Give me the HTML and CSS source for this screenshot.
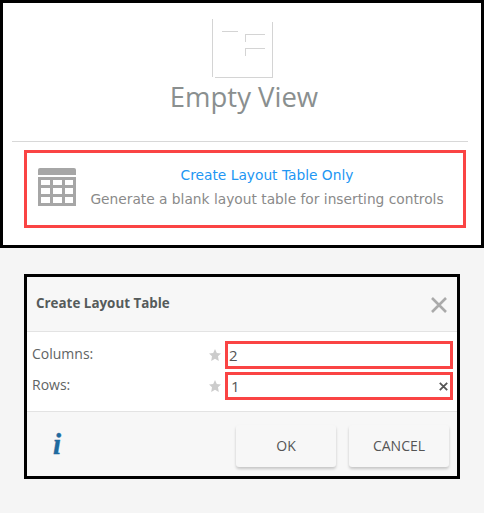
FILE: index.html
```html
<!DOCTYPE html>
<html lang="en">
<head>
<meta charset="utf-8">
<title>Create Layout Table</title>
<link rel="stylesheet" href="styles.css">
</head>
<body>
<section class="panel">
  <svg class="empty-icon" width="62" height="60" viewBox="0 0 62 60" fill="none" stroke="#d4d4d4" stroke-width="1">
    <path d="M1.500 1V59M4 59.500H62M61.500 4V59M11 13.500H27M34 16.500H54M34.500 17V24M34 30.500H54M34.500 31V38"/>
  </svg>
  <h1 class="empty-title">Empty View</h1>
  <hr class="rule">
  <div class="option">
    <svg class="table-icon" width="38" height="38" viewBox="0 0 38 38">
      <path class="table-head" d="M0 7V2Q0 0 2 0H36Q38 0 38 2V7Z"/>
      <path class="table-body" fill-rule="evenodd" d="M0 9H38V38H0ZM3 12V17H12V12ZM15 12V17H24V12ZM27 12V17H35V12ZM3 20V26H12V20ZM15 20V26H24V20ZM27 20V26H35V20ZM3 29V35H12V29ZM15 29V35H24V29ZM27 29V35H35V29Z"/>
    </svg>
    <div class="option-text">
      <div class="option-link">Create Layout Table Only</div>
      <div class="option-desc">Generate a blank layout table for inserting controls</div>
    </div>
  </div>
</section>
<section class="dialog">
  <header class="dialog-head">
    <h2 class="dialog-title">Create Layout Table</h2>
    <svg class="close" width="16" height="16" viewBox="0 0 16 16" stroke="#aaa" stroke-width="2.600"><path d="M1 1L15 15M15 1L1 15"/></svg>
  </header>
  <div class="dialog-body">
    <div class="row">
      <label class="row-label">Columns:</label>
      <svg class="star" width="12" height="12" viewBox="0 0 12 12"><polygon points="6,0 7.800,3.900 12,4.400 9,7.300 9.800,12 6,9.700 2.200,12 3,7.300 0,4.400 4.200,3.900"/></svg>
      <div class="field"><span class="value">2</span></div>
    </div>
    <div class="row">
      <label class="row-label">Rows:</label>
      <svg class="star" width="12" height="12" viewBox="0 0 12 12"><polygon points="6,0 7.800,3.900 12,4.400 9,7.300 9.800,12 6,9.700 2.200,12 3,7.300 0,4.400 4.200,3.900"/></svg>
      <div class="field"><span class="value value-one">1</span>
        <svg class="clear" width="9" height="9" viewBox="0 0 9 9" stroke="#555" stroke-width="1.800"><path d="M.8 .8L8.200 8.200M8.200 .8L.8 8.200"/></svg>
      </div>
    </div>
  </div>
  <footer class="dialog-foot">
    <span class="info">i</span>
    <button class="btn">OK</button>
    <button class="btn">CANCEL</button>
  </footer>
</section>
</body>
</html>
```
FILE: styles.css
```css
* { box-sizing: border-box; }
html, body { margin: 0; padding: 0; }
body { width: 484px; height: 513px; background: #f5f5f5; font-family: "Open Sans", sans-serif; overflow: hidden; }

.panel { width: 484px; height: 248px; background: #fff; border: 3px solid #000; display: flex; flex-direction: column; padding: 15px 13px 0 9px; }
.empty-icon { display: block; margin-left: 199px; }
.empty-title { margin: 0 0 0 8px; text-align: center; font-size: 27.500px; line-height: 37px; font-weight: 400; color: #8a8f8f; }
.rule { width: 456px; height: 1px; margin: 26px 0 0 0; border: 0; background: #d8d8d8; }
.option { width: 442px; height: 78px; margin: 8px 0 0 12px; border: 3px solid #fa4444; display: flex; align-items: center; padding: 0 0 4px 11px; }
.table-icon { flex: none; display: block; }
.table-head, .table-body { fill: #a6a6a6; }
.option-text { margin-left: 14px; flex: none; width: 354px; text-align: center; white-space: nowrap; font-family: "DejaVu Sans", sans-serif; font-size: 13.770px; }
.option-link { color: #2196f3; line-height: 20px; }
.option-desc { color: #8a8a8a; line-height: 20px; margin-top: 4px; }

.dialog { width: 436px; height: 205px; margin: 26px 0 0 24px; border: 3px solid #000; background: #fff; display: flex; flex-direction: column; }
.dialog-head { height: 55px; background: #f7f7f7; border-bottom: 1px solid #e3e3e3; display: flex; align-items: center; justify-content: space-between; padding: 0 10px 2px 9px; flex: none; }
.dialog-title { margin: 0; font-size: 13.400px; font-weight: 700; color: #555b5b; }
.close { margin-top: 4px; }
.dialog-body { flex: 1; padding-top: 9px; display: flex; flex-direction: column; gap: 3px; }
.row { height: 28px; display: flex; align-items: center; padding-left: 5px; color: #5f6464; font-size: 14px; }
.row-label { width: 177px; position: relative; top: -2px; }
.star { flex: none; fill: #ccc; }
.field { width: 228px; height: 28px; margin-left: 4px; border: 3px solid #fa4444; display: flex; align-items: center; justify-content: space-between; padding-right: 2px; font-size: 15px; color: #555; }
.value { padding-left: 1px; }
.value-one { padding-left: 3px; }
.clear { display: block; }
.dialog-foot { height: 65px; flex: none; background: #f7f7f7; border-top: 1px solid #e3e3e3; display: flex; align-items: flex-start; padding-top: 13px; padding-left: 26px; }
.info { flex: none; width: 183px; margin-top: 2px; font-family: "Liberation Serif", serif; font-weight: 700; font-style: italic; font-size: 29px; line-height: 34px; color: #1f6a9e; -webkit-text-stroke: .4px #1f6a9e; }
.btn { flex: none; width: 100px; height: 42px; margin-right: 13px; border: 0; border-radius: 3px; background: #f7f7f7; box-shadow: 0 2px 3px rgba(0,0,0,.2); font-family: "Open Sans", sans-serif; font-size: 14px; color: #555; padding: 0 0 2px; }
```
